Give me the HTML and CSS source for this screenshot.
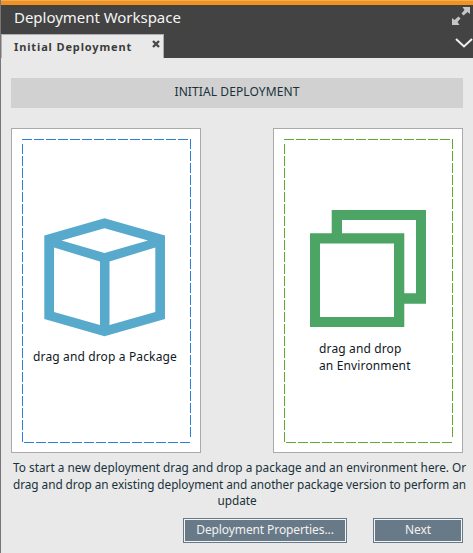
FILE: index.html
```
<!DOCTYPE html>
<html lang="en">
<head>
<meta charset="utf-8">
<title>Deployment Workspace</title>
<link rel="stylesheet" href="styles.css">
</head>
<body>
<div class="workspace">
  <header class="header">
    <div class="titlebar">
      <h1 class="title">Deployment Workspace</h1>
      <svg class="expand" width="18" height="18" viewBox="0 0 18 18"><path d="M10.500 0H18V7L15.500 5L11.500 8.500L9.500 6.500L12.500 3Z M0 11L2.500 13L6.500 9.500L8.500 11.500L5.500 15L7.500 18H0Z"/></svg>
    </div>
    <div class="tabbar">
      <div class="tab"><span class="tab-label">Initial Deployment</span><svg class="close" width="8" height="8" viewBox="0 0 8 8"><path d="M1 1L7 7M7 1L1 7"/></svg></div>
      <svg class="chevron" width="18" height="12" viewBox="0 0 18 12"><path d="M1 2L9 9.500L17 2"/></svg>
    </div>
  </header>
  <main class="content">
    <h2 class="section"><span>INITIAL DEPLOYMENT</span></h2>
    <div class="panels">
      <section class="panel package">
        <svg width="188" height="323" viewBox="12 129 188 323">
          <path class="dash" d="M22 139.500H191M190.500 139V438M24 442.500H191M22.500 144V443"/>
          <path class="cube" fill-rule="evenodd" d="M104.500 218.300L165 235.500V319L104.500 336.200L44.300 319V235.500ZM104.500 228.300L61.500 240.500L104.500 253L148 240.500ZM54 247.500V312L100 325V261.500ZM155.300 247.500L109.500 261.500V325L155.300 312Z"/>
        </svg>
        <p class="caption">drag and drop a Package</p>
      </section>
      <section class="panel environment">
        <svg width="188" height="323" viewBox="274 129 188 323">
          <path class="dash" d="M284 139.500H453M452.500 139V438M286 442.500H453M284.500 144V443"/>
          <path class="squares" fill-rule="evenodd" d="M331.700 210H426V303.700H404.300V293.300H416V220H342V233.200H331.700ZM310 233.200H404.300V327H310ZM320 243.500V317H394V243.500Z"/>
        </svg>
        <p class="caption">drag and drop<br><span>an Environment</span></p>
      </section>
    </div>
    <p class="help"><span class="line1">To start a new deployment drag and drop a package and an environment here. Or</span><span class="line2">drag and drop an existing deployment and another package version to perform an</span><span class="line3">update</span></p>
    <div class="actions">
      <button class="properties"><span>Deployment Properties...</span></button>
      <button class="next"><span>Next</span></button>
    </div>
  </main>
</div>
</body>
</html>
```
FILE: styles.css
```
* { box-sizing: border-box; }
body { margin: 0; overflow: hidden; font-family: "Noto Sans", sans-serif; color: #18323b; }
h1, h2, p { margin: 0; font-weight: 400; }
svg { display: block; }
.workspace { width: 473px; height: 553px; background: #e9e9e9; border-left: 1px solid #777; overflow: hidden; }
.header { height: 58px; padding-top: 5px; background: linear-gradient(#f0ad5c 0 1px, #f19220 1px 5px, #434343 5px); }
.titlebar { display: flex; justify-content: space-between; height: 29px; padding: 2px 3px 0 13px; }
.title { font: 15px/21px "Noto Sans", sans-serif; color: #f5f5f5; white-space: nowrap; letter-spacing: -.03px; }
.expand { fill: #c6c6c6; }
.tabbar { display: flex; justify-content: space-between; height: 24px; }
.tab { display: flex; justify-content: space-between; width: 163px; height: 24px; padding: 0 3px 0 12px; background: #e9e9e9; border: 1px solid #b1acb1; border-width: 1px 1px 0; }
.tab-label { font: 700 11px/23px "Noto Sans", sans-serif; color: #3c3c3c; letter-spacing: .87px; white-space: nowrap; }
.close { margin-top: 5px; stroke: #484848; stroke-width: 2.4; fill: none; }
.chevron { margin: 3px 0 0; stroke: #f1f1f1; stroke-width: 2; fill: none; }
.content { padding: 20px 10px 0; }
.section { height: 30px; background: #d1d1d1; text-align: center; font: 12px/28px "Noto Sans", sans-serif; letter-spacing: .1px; }
.panels { display: flex; justify-content: space-between; margin-top: 20px; }
.panel { position: relative; width: 190px; height: 325px; background: #fff; border: 1px solid #aaa; }
.dash { fill: none; stroke-width: 1; stroke-dasharray: 10 2; }
.package .dash { stroke: #2c80d3; }
.environment .dash { stroke: #5baa32; }
.cube { fill: #57aacb; }
.squares { fill: #4ca565; }
.caption { position: absolute; font: 12px/17px "Noto Sans", sans-serif; color: #101824; letter-spacing: .14px; white-space: nowrap; }
.package .caption { left: 21px; top: 219px; }
.environment .caption { left: 45px; top: 211px; }
.help { height: 51px; margin-top: 6px; font-size: 11.800px; line-height: 16.500px; letter-spacing: -.05px; }
.help span { display: block; width: 458px; margin-left: 2px; white-space: nowrap; }
.help .line1 { letter-spacing: .01px; }
.help .line3 { text-align: center; margin-left: 0; width: 452px; }
.actions { display: flex; justify-content: flex-end; gap: 26px; margin-top: 8px; }
button { height: 25px; padding: 0 0 2px; border: 1px solid #687987; background: #687987; box-shadow: inset 0 0 0 1px #f2f4f5; color: #f1f1f1; font: 12px/21px "Noto Sans", sans-serif; letter-spacing: -.1px; }
.properties { width: 164px; }
.next { width: 90px; }
```
